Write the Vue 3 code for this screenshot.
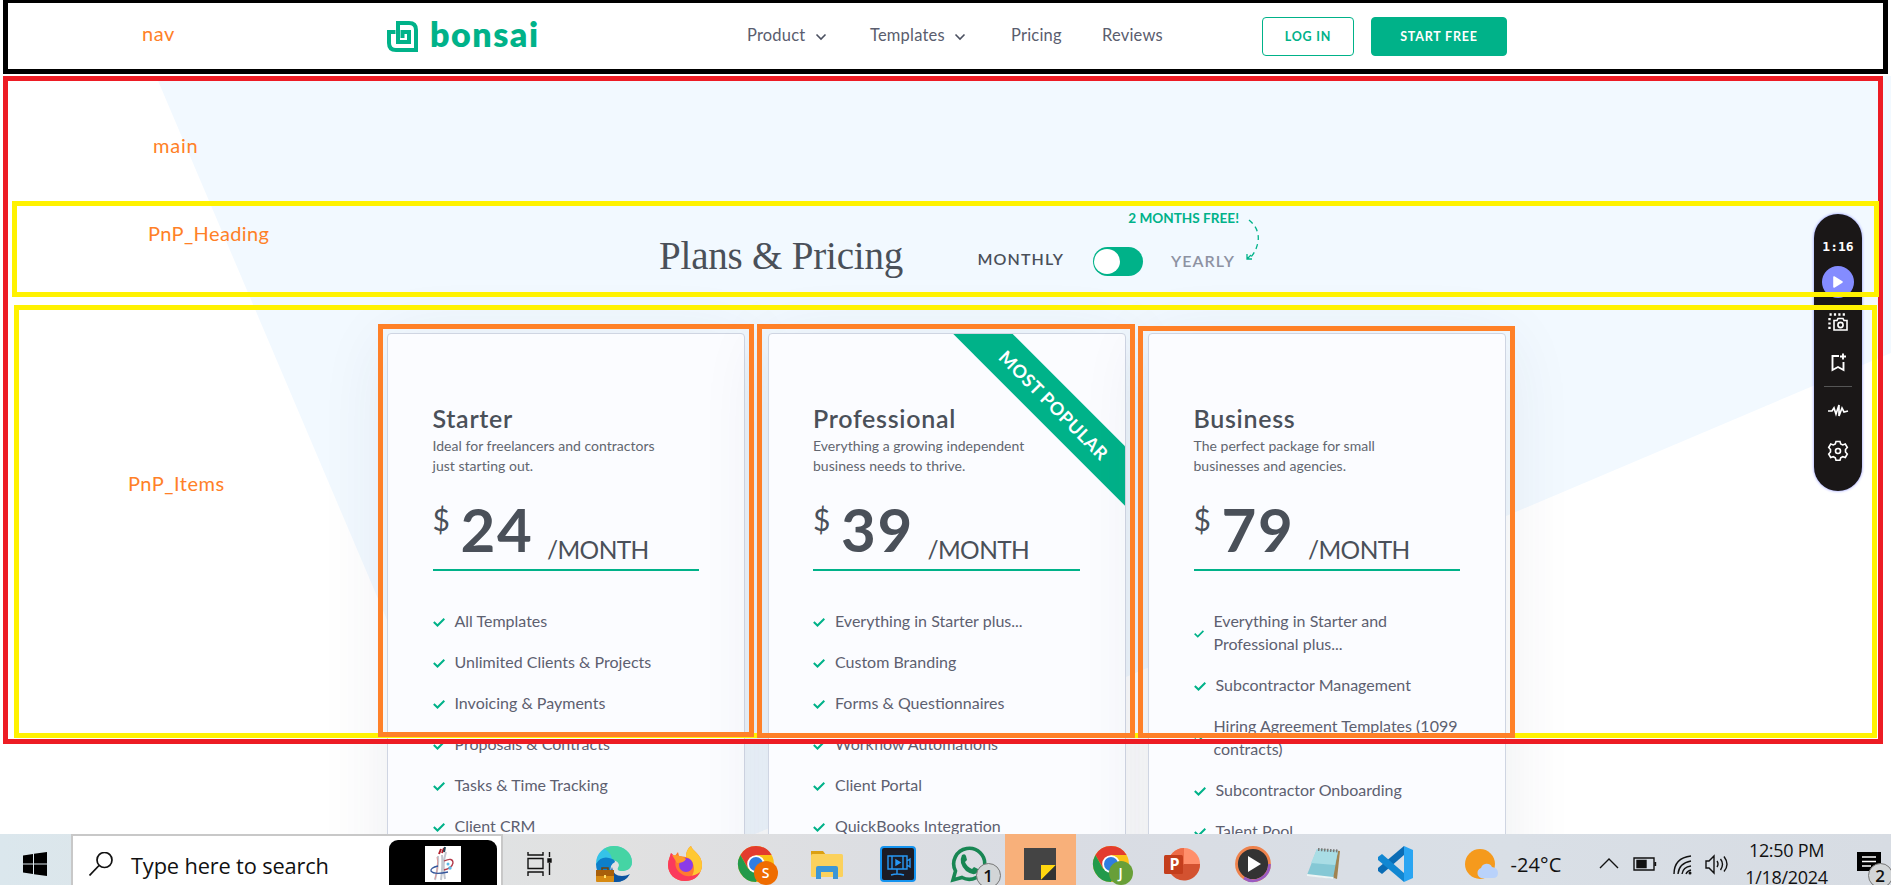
<script setup>
const links = [
  { label: 'Product', menu: true },
  { label: 'Templates', menu: true },
  { label: 'Pricing', menu: false },
  { label: 'Reviews', menu: false },
]

const plans = [
  {
    name: 'Starter',
    lines: ['Ideal for freelancers and contractors', 'just starting out.'],
    price: '24',
    features: [
      ['All Templates'],
      ['Unlimited Clients & Projects'],
      ['Invoicing & Payments'],
      ['Proposals & Contracts'],
      ['Tasks & Time Tracking'],
      ['Client CRM'],
    ],
  },
  {
    name: 'Professional',
    popular: true,
    lines: ['Everything a growing independent', 'business needs to thrive.'],
    price: '39',
    features: [
      ['Everything in Starter plus...'],
      ['Custom Branding'],
      ['Forms & Questionnaires'],
      ['Workflow Automations'],
      ['Client Portal'],
      ['QuickBooks Integration'],
    ],
  },
  {
    name: 'Business',
    lines: ['The perfect package for small', 'businesses and agencies.'],
    price: '79',
    features: [
      ['Everything in Starter and', 'Professional plus...'],
      ['Subcontractor Management'],
      ['Hiring Agreement Templates (1099', 'contracts)'],
      ['Subcontractor Onboarding'],
      ['Talent Pool'],
    ],
  },
]

const chromes = { s: { letter: 'S', color: '#ef6c00' }, j: { letter: 'J', color: '#689f38' } }
const apps = ['edge', 'firefox', 's', 'folder', 'video', 'whatsapp', 'sticky', 'j', 'ppt', 'media', 'notepad', 'code']
</script>

<template>
  <div class="screen">
    <div class="site">
      <svg class="backdrop" width="1891" height="834" viewBox="0 0 1891 834">
        <polygon points="156,76 1891,76 1891,353 767,829 520,933" fill="#f2f9ff" />
      </svg>

      <nav class="nav">
        <div class="brand">
          <svg width="31" height="31" viewBox="0 0 31 31" fill="none" stroke="#00b289" stroke-width="4">
            <path d="M8.500 11H2v11q0 7 7 7h20V9q0-7-7-7H11v19h11V11h-6.500v6" />
          </svg>
          <span class="wordmark">bonsai</span>
        </div>
        <a v-for="l in links" :key="l.label" class="link">
          {{ l.label }}
          <svg v-if="l.menu" width="12" height="8" viewBox="0 0 12 8" fill="none" stroke="#4b5060" stroke-width="1.6">
            <path d="M1.5 1.5 6 6l4.500-4.500" />
          </svg>
        </a>
        <button class="btn outline">LOG IN</button>
        <button class="btn solid">START FREE</button>
      </nav>

      <header class="head">
        <h1>Plans &amp; Pricing</h1>
        <span class="period monthly">MONTHLY</span>
        <span class="toggle"><i></i></span>
        <div class="yearly">
          <span class="free">2 MONTHS FREE!</span>
          <span class="period muted">YEARLY</span>
        </div>
        <svg class="swoop" width="16" height="46" viewBox="0 0 16 46" fill="none" stroke="#00b289" stroke-width="1.3">
          <path d="M3 3Q14 12 12 25 10 35 4 41" stroke-dasharray="5 4" />
          <path d="M1 37v5h5M1.500 41.500 5 38" />
        </svg>
      </header>

      <section class="plans">
        <article v-for="p in plans" :key="p.name" class="card">
          <div v-if="p.popular" class="ribbon">MOST POPULAR</div>
          <h2>{{ p.name }}</h2>
          <p class="desc"><span v-for="t in p.lines" :key="t">{{ t }}</span></p>
          <div class="price">
            <span class="cur">$</span><span class="num">{{ p.price }}</span><span class="per">/MONTH</span>
          </div>
          <ul>
            <li v-for="f in p.features" :key="f[0]" :class="{ tall: f.length > 1 }">
              <svg class="tick" viewBox="0 0 12 9" fill="none" stroke="#00b289" stroke-width="2">
                <path d="M.8 4 4.500 7.500 11.300.8" />
              </svg>
              <span class="feat"><span v-for="t in f" :key="t">{{ t }}</span></span>
            </li>
          </ul>
        </article>
      </section>

      <aside class="recorder">
        <b>1:16</b>
        <svg width="48" height="278" viewBox="0 0 48 278" fill="none" stroke="#fff" stroke-width="1.6">
          <circle cx="24" cy="68" r="16" fill="#848cff" stroke="none" />
          <path d="M20 63v10l8-5z" fill="#fff" stroke-linejoin="round" />
          <path d="M15.500 100.500h16M15.500 104v13" stroke-width="2.400" stroke-dasharray="2.200 2.200" />
          <path d="M20 106.500h3l1-2h5l1 2h3v9.500H20z" /><circle cx="26.500" cy="111" r="2.600" />
          <path d="M25 142h-6.500v14l5.500-3 5.500 3v-8M29 139.500v6M26 142.500h6" stroke-width="1.900" />
          <path d="M10 172.500h28" stroke="#555" stroke-width="1" />
          <path d="M14 197h4l2-3 2 6 3-9 0 11 3-8 2 4 4-1" stroke-width="1.700" />
          <g transform="translate(0 -2)">
            <path d="m22 229.500h4l.7 2.500 2 1 2.600-1 2 3.500-1.800 2v2.500l1.800 2-2 3.500-2.600-.8-2 1.100-.7 2.500h-4l-.7-2.500-2-1.100-2.600.8-2-3.500 1.800-2v-2.500l-1.800-2 2-3.500 2.600 1 2-1z" />
            <circle cx="24" cy="239" r="2.500" />
          </g>
        </svg>
      </aside>

      <div class="frame f-nav"></div>
      <div class="frame f-main"></div>
      <div class="frame f-heading"></div>
      <div class="frame f-items"></div>
      <div class="frame f-card1"></div>
      <div class="frame f-card2"></div>
      <div class="frame f-card3"></div>
      <span class="note n-nav">nav</span>
      <span class="note n-main">main</span>
      <span class="note n-heading">PnP_Heading</span>
      <span class="note n-items">PnP_Items</span>
    </div>

    <footer class="taskbar">
      <div class="start">
        <svg width="24" height="24" viewBox="0 0 24 24"><path d="M0 3.500 10 2v9.500H0zM11 1.800 24 0v11.500H11zM0 12.500h10V22L0 20.500zM11 12.500h13V24L11 22.200z" /></svg>
      </div>
      <div class="search">
        <svg width="24" height="24" viewBox="0 0 24 24" fill="none" stroke="#111" stroke-width="1.700"><circle cx="15.500" cy="8" r="7.500" /><path d="M10 13.500.5 23.500" /></svg>
        <span>Type here to search</span>
        <div class="doodle">
          <svg width="36" height="36" viewBox="0 0 36 36" fill="none">
            <rect width="36" height="36" fill="#fff" />
            <path d="M14 8 16 3M17 7l2-5" stroke="#b3202c" stroke-width="2" /><path d="M19 6l1-5" stroke="#245" stroke-width="2" />
            <path d="M13 10q1 8-3 24M17 9q1 10-1 25M21 6q-4 12-1 27" stroke="#c3c7d0" stroke-width="2" />
            <path d="M12 11q2 8-2 22" stroke="#d99" /><path d="M19 15q9-4 9 2-1 5-9 7" stroke="#b33a4a" stroke-width="1.300" />
            <path d="M13 20q-8 2-7 5 3 4 17 1" stroke="#34569b" stroke-width="1.300" />
            <circle cx="23" cy="18" r="1.500" fill="#5bb8e8" /><circle cx="25" cy="22" r="1.700" fill="#5bb8e8" />
          </svg>
        </div>
      </div>
      <div class="taskview">
        <svg width="25" height="24" viewBox="0 0 25 24" fill="none" stroke="#111" stroke-width="1.400"><path d="M1 0v3h15V0M1 24v-4h15v4M1 6.500h15v10H1zM22.500 0v5M22.500 11v12" /><path d="M21 7h3v3h-3z" fill="#111" /></svg>
      </div>

      <div v-for="a in apps" :key="a" class="app" :class="a">
        <svg width="38" height="38" viewBox="0 0 38 38">
          <template v-if="a === 'edge'">
            <path d="M1 19C1 8 9 1 19 1s18 7 18 16c0 7-6 9-10 9-3 0-5-1-4-3 3-4-1-8-6-8-7 0-12 4-16 4z" fill="#35c3e8" />
            <path d="M19 1c10 0 18 7 18 16 0 7-6 9-10 9-3 0-5-1-4-3 3-4-1-8-6-8 0-6-5-10-8-11 3-2 6-3 10-3z" fill="#4bd98d" opacity=".75" />
            <path d="M1 19q5-8 13-6 6 1 6 4-6 3-4 10 4 8 18 3-6 8-15 7C8 36 1 29 1 19z" fill="#0d7fc9" />
            <path d="M17 22q1 9 10 9 5 0 8-2-5 9-16 8-6-5-2-15z" fill="#0c54a0" />
            <rect x="1" y="25" width="18" height="12" rx="1" fill="#d78a12" /><path d="M1 25h18v6H1z" fill="#a85f0a" /><path d="M7 25v-2h6v2" fill="none" stroke="#70410a" stroke-width="1.500" /><rect x="9" y="30" width="2" height="3" fill="#ffe06b" />
          </template>
          <template v-else-if="a === 'firefox'">
            <path d="M19 36C9 36 2 29 2 20c0-5 2-8 3-12l3 4 4-5 1 4 7 1c0-5 2-9 5-11 1 5 11 8 11 19 0 9-7 16-17 16z" fill="#ff7a2f" />
            <path d="M25 1c-3 2-5 6-5 11 9 3 11 15 3 23 8-2 13-8 13-15 0-11-10-14-11-19z" fill="#ffc832" />
            <path d="M2 20c0 9 7 16 17 16 8 0 13-4 15-9-6 5-15 6-21 0C8 22 9 15 11 13L5 8c-1 4-3 7-3 12z" fill="#fb3a5c" />
            <circle cx="20" cy="20" r="7" fill="#8b3be8" /><path d="M6 10q9 0 14 4-2 4-9 4z" fill="#ff9b2b" />
          </template>
          <template v-else-if="chromes[a]">
            <circle cx="19" cy="19" r="18" fill="#fbc116" />
            <path d="M3.400 10A18 18 0 0 1 34.600 10H19L11.200 23.500z" fill="#e33b2e" />
            <path d="M3.400 10A18 18 0 0 0 19 37l8-13.500-8 4-8-4z" fill="#229a4b" />
            <circle cx="19" cy="19" r="8.800" fill="#fff" /><circle cx="19" cy="19" r="7" fill="#2f7de1" />
          </template>
          <template v-else-if="a === 'folder'">
            <path d="M3 6h12l3 4-3 3H3z" fill="#dca012" /><rect x="3" y="9" width="32" height="23" rx="1.500" fill="#fbd15c" /><path d="M8 34V23q0-2 2-2h18q2 0 2 2v11h-5v-7H13v7z" fill="#3b96d6" />
          </template>
          <template v-else-if="a === 'video'">
            <rect x="2" y="2" width="34" height="34" rx="3" fill="#1b1c26" stroke="#1493ef" stroke-width="2" />
            <g fill="none" stroke="#2798f5" stroke-width="1.400"><path d="M9 11h19v13H9zM13 11v13M24 11v13M28 16l3-2v8l-3-2M18 24v5M12 30q6-2 13 0" /><path d="m17 15 4 2.500-4 2.500z" fill="#2798f5" /></g>
          </template>
          <template v-else-if="a === 'whatsapp'">
            <path d="M3 35 5.500 26A15.500 15.500 0 1 1 12 32.500z" fill="none" stroke="#188653" stroke-width="3.600" />
            <path d="M12 10q3-2 4 1l1 4-2 2q2 5 7 7l2-2 4 2q2 1-1 4-4 3-11-2Q8 18 12 10z" fill="#188653" />
          </template>
          <template v-else-if="a === 'sticky'">
            <path d="M3 3h32v32H3z" fill="#444" /><path d="M20 35V20h15z" fill="#ffd60f" /><path d="M20 35 35 20v15z" fill="#333" />
          </template>
          <template v-else-if="a === 'ppt'">
            <circle cx="21" cy="19" r="16" fill="#ff8f6b" /><path d="M21 19h16a16 16 0 0 1-31 6z" fill="#d35230" /><path d="M21 3v16H5a16 16 0 0 1 16-16z" fill="#ed6c47" /><rect x="1" y="10" width="19" height="19" rx="1.500" fill="#c43e1c" />
          </template>
          <template v-else-if="a === 'media'">
            <circle cx="19" cy="19" r="16.500" fill="#333" stroke="#ee824c" stroke-width="2.800" /><path d="M35.500 19A16.500 16.500 0 0 1 10 33" fill="none" stroke="#9a5bc2" stroke-width="2.800" /><path d="M14 11v16l13-8z" fill="#fff" />
          </template>
          <template v-else-if="a === 'notepad'">
            <path d="M14 4 35 6 32 34 29 33z" fill="#a18350" /><path d="M12 4 33 6 28 34 2 30z" fill="#85c8d5" /><path d="M12 4 33 6 30 20 6 18z" fill="#a9dde5" /><path d="M2 29 28 32v2L2 31z" fill="#eef4f4" /><path d="M13 4.500 33 6" stroke="#777" stroke-width="3" stroke-dasharray="1.500 1.500" />
          </template>
          <template v-else>
            <path d="M28 1 37 5v28l-9 4z" fill="#2aa5f2" /><path d="M28 1v9L6 29l-4-3v-3z" fill="#0a6cb5" /><path d="M28 37v-9L6 9l-4 3v3z" fill="#1187d2" />
          </template>
        </svg>
        <span v-if="a === 'ppt'" class="pletter">P</span>
        <span v-if="chromes[a]" class="profile" :style="{ background: chromes[a].color }">{{ chromes[a].letter }}</span>
        <span v-if="a === 'whatsapp'" class="count">1</span>
      </div>

      <div class="weather">
        <svg width="34" height="32" viewBox="0 0 34 32"><circle cx="15" cy="16" r="15" fill="#f59a1d" /><path d="M16 30a6 5.500 0 0 1 0-10 6 6 0 0 1 11-1q6 1 6 6 0 5-5 5z" fill="#b9d2fb" /></svg>
        <span>-24°C</span>
      </div>
      <svg class="tray" width="130" height="22" viewBox="0 0 130 22" fill="none" stroke="#111" stroke-width="1.400">
        <path d="M1 15 10 6l9 9" />
        <path d="M35 5h20v12H35zM56.500 9v4" /><path d="M38 7.500h9v7h-9z" fill="#111" />
        <path d="M75 21q0-16 17-18M79 21q1-11 13-13M83 21q1-7 9-8M87 21q1-3 5-4" /><circle cx="91" cy="20" r="1.500" fill="#111" stroke="none" />
        <path d="M107 8h3l5-5v17l-5-5h-3zM118 8q2 3 0 6M121.500 6q4 5 0 11M125 3.500q6 8 0 15" />
      </svg>
      <div class="clock"><span class="time">12:50 PM</span><span class="date">1/18/2024</span></div>
      <div class="action">
        <svg width="24" height="25" viewBox="0 0 24 25"><path d="M0 0h24v19h-6v6l-6-6H0z" /><path d="M5 5h14M5 9.500h14M5 14h9" stroke="#fff" stroke-width="1.400" /></svg>
        <span class="count">2</span>
      </div>
    </footer>
  </div>
</template>

<style>
html, body { margin: 0; background: #fff; overflow: hidden; }
</style>

<style scoped>
.screen { width: 1891px; height: 885px; overflow: hidden; font-family: Lato, "Open Sans", sans-serif; color: #4a5059; }
.site { position: relative; height: 834px; overflow: hidden; }
.backdrop { position: absolute; left: 0; top: 0; }
.nav { position: relative; height: 76px; padding-left: 387px; display: grid; grid-template-columns: 360px 123px 141px 91px 160px 109px 136px; background: #fff; }
.brand { display: flex; padding-top: 21px; gap: 12px; }
.wordmark { font-weight: 800; font-size: 34px; line-height: 34px; letter-spacing: 1.500px; color: #00b289; margin-top: -4px; }
.link { font-size: 16.500px; line-height: 20px; padding-top: 25px; color: #5a5d6e; white-space: nowrap; letter-spacing: .2px; }
.link svg { margin-left: 5px; vertical-align: 0; }
.btn { height: 39px; margin: 17px 0 0; padding: 0; border: 1px solid #00b289; border-radius: 4px; background: #fff; color: #00b289; font: 700 12.500px/37px Lato, sans-serif; letter-spacing: .8px; }
.outline { width: 92px; }
.solid { background: #00b289; color: #fff; }

.head { position: relative; height: 257px; padding-left: 659px; display: grid; grid-template-columns: 318.500px 115.500px 50px 103px 16px; align-items: start; }
h1 { margin: 160px 0 0; font: 400 39px/40px "Liberation Serif", serif; letter-spacing: -.2px; white-space: nowrap; }
.period { font-weight: 600; font-size: 16px; line-height: 20px; letter-spacing: 1.100px; }
.monthly { margin-top: 173px; }
.toggle { width: 50px; height: 29px; border-radius: 15px; margin-top: 171px; background: #00b289; display: flex; align-items: center; }
.toggle i { width: 26px; height: 25px; border-radius: 50%; background: #fff; margin-left: 1px; }
.yearly { display: flex; flex-direction: column; align-items: flex-end; padding-top: 133px; white-space: nowrap; width: 96px; }
.free { color: #00b289; font-weight: 700; font-size: 13.600px; line-height: 18px; }
.muted { color: #8d92a2; margin: 24px 4px 0 0; }
.swoop { margin-top: 141px; }

.plans { position: relative; display: flex; gap: 22.500px; padding-left: 387px; }
.card { position: relative; box-sizing: border-box; width: 358px; height: 620px; padding: 69px 45px 0 44.500px; border: 1px solid #cfd5e2; border-radius: 4px; background: #fbfcff; box-shadow: 0 10px 70px rgba(40, 50, 90, .09); overflow: hidden; }
h2 { margin: 0; font-size: 25px; line-height: 30px; font-weight: 600; letter-spacing: .7px; }
.desc { margin: 3px 0 0; font-size: 14px; line-height: 20px; white-space: nowrap; letter-spacing: .03px; color: #62666f; }
.desc span, .feat span { display: block; }
.price { display: flex; align-items: flex-start; height: 93px; border-bottom: 2px solid #00b289; }
.cur { font-size: 30px; line-height: 40px; margin-top: 23px; width: 28px; }
.num { font-size: 60px; line-height: 60px; font-weight: 700; margin-top: 23px; width: 86.500px; letter-spacing: 1.800px; }
.per { font-size: 24.500px; line-height: 30px; margin-top: 59px; letter-spacing: -.6px; }
ul { list-style: none; margin: 38px 0 0; padding: 0; }
li { display: flex; align-items: center; margin-bottom: 18px; font-size: 16px; line-height: 23px; color: #5d6070; white-space: nowrap; }
.tick { width: 12px; height: 9px; margin: 3px 10px 0 0; }
.tall .tick { width: 10px; height: 8px; }
.ribbon { position: absolute; left: 155px; top: 50px; width: 260px; height: 42px; transform: rotate(45deg); background: #00b289; color: #fff; font-weight: 700; font-size: 18px; line-height: 42px; text-align: center; letter-spacing: .5px; }

.recorder { position: absolute; left: 1814px; top: 214px; width: 48px; height: 277px; border-radius: 24px; background: #1a1717; box-shadow: 0 0 3px #848cff; }
.recorder b { position: absolute; left: 0; width: 48px; top: 24px; text-align: center; color: #fff; font: 700 13px/18px "DejaVu Sans Mono", monospace; }
.recorder svg { display: block; }

.frame { position: absolute; box-sizing: border-box; border: 5px solid #ff8027; }
.f-nav { left: 3px; top: -2px; width: 1885px; height: 76px; border-color: #000; }
.f-main { left: 3px; top: 76px; width: 1880px; height: 668px; border-color: #ed1c24; }
.f-heading { left: 12px; top: 201px; width: 1867px; height: 96px; border-color: #fff200; }
.f-items { left: 14px; top: 305px; width: 1863px; height: 433px; border-color: #fff200; }
.f-card1 { left: 378px; top: 324px; width: 376px; height: 413px; }
.f-card2 { left: 757px; top: 324px; width: 378px; height: 414px; }
.f-card3 { left: 1138px; top: 326px; width: 377px; height: 412px; }
.note { position: absolute; color: #ff8027; font-size: 20px; line-height: 24px; letter-spacing: .5px; }
.n-nav { left: 142px; top: 21px; }
.n-main { left: 153px; top: 133px; letter-spacing: .8px; }
.n-heading { left: 148px; top: 221px; letter-spacing: .4px; }
.n-items { left: 128px; top: 471px; }

.taskbar { height: 51px; overflow: hidden; display: flex; align-items: flex-start; background: linear-gradient(90deg, #dbe7ed 0, #dfe3e5 20%, #e1e1e1 32%, #d9dce3 55%, #d9dfe6 80%, #d7dce3 100%); color: #111; font-family: "Open Sans", "Noto Sans", sans-serif; }
.start { width: 48px; padding: 18px 0 0 23px; }
.search { box-sizing: border-box; width: 432px; height: 60px; border: 2px solid #c8c8c8; background: #fff; display: flex; align-items: flex-start; }
.search > svg { margin: 16px 18px 0 16px; }
.search > span { font-size: 21.800px; line-height: 28px; margin-top: 16px; width: 258px; white-space: nowrap; letter-spacing: -.15px; }
.doodle { box-sizing: border-box; width: 108px; height: 60px; margin: 4px 0 0 0; padding: 6px 0 0 36px; border-radius: 9px; background: #000; flex: none; }
.taskview { width: 51.500px; padding: 18px 0 0 24px; }
.app { position: relative; width: 71px; height: 51px; flex: none; }
.app > svg { display: block; margin: 11px auto 0; }
.sticky { background: #f8b07a; }
.pletter { position: absolute; left: 23px; top: 18px; font-weight: 700; font-size: 16px; line-height: 24px; color: #fff; }
.profile { position: absolute; left: 33px; top: 27px; width: 24px; height: 24px; border-radius: 50%; color: #fff; font-size: 14px; line-height: 24px; text-align: center; font-weight: 600; }
.count { position: absolute; width: 23px; height: 23px; border: 1px solid #777; border-radius: 50%; background: #d2d5d7; font-size: 17px; line-height: 24px; text-align: center; font-weight: 600; }
.whatsapp .count { left: 42px; top: 29px; }
.weather { display: flex; margin: 14px 0 0 34px; width: 134px; gap: 12px; flex: none; }
.weather span { font-size: 20px; line-height: 28px; margin-top: 3px; white-space: nowrap; letter-spacing: .1px; }
.tray { margin-top: 19px; flex: none; }
.clock { width: 86px; margin: 0 0 0 15px; display: flex; flex-direction: column; align-items: center; font-size: 18px; line-height: 27px; white-space: nowrap; flex: none; letter-spacing: -.3px; padding-top: 3px; }
.action { position: relative; margin: 18px 0 0 27px; }
.action .count { left: 11px; top: 11px; }
</style>
